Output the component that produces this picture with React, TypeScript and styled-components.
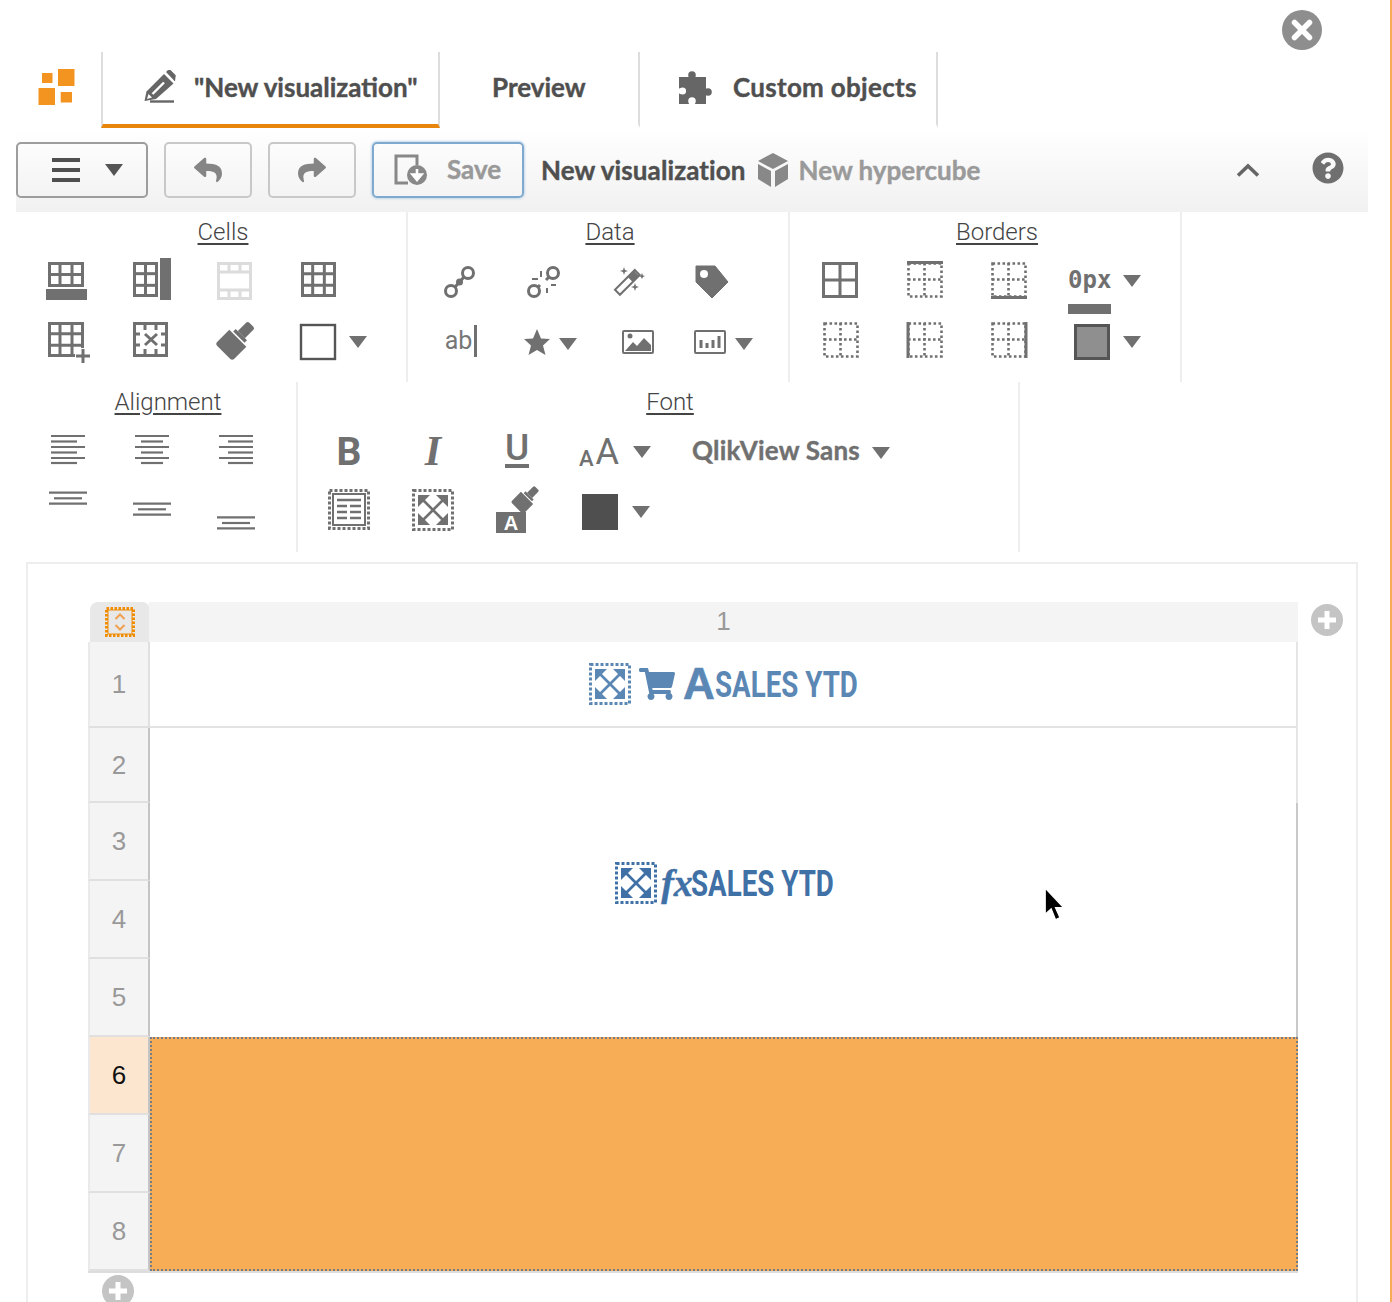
import React from "react"
import styled, { createGlobalStyle } from "styled-components"
import { FaReply, FaShare, FaShoppingCart, FaQuestionCircle } from "react-icons/fa"

const INK = "#707070"

const GlobalStyle = createGlobalStyle`
  html, body {
    margin: 0;
    padding: 0;
    background: #fff;
  }
  * {
    box-sizing: border-box;
  }
`

const Frame = ({ children }: { children: React.ReactNode }) => (
  <GlyphSvg viewBox="0 0 84 60">{children}</GlyphSvg>
)

const CaretMark = ({ x, y, color = INK }: { x: number; y: number; color?: string }) => (
  <polygon points={`${x},${y} ${x + 18},${y} ${x + 9},${y + 12}`} fill={color} />
)

const TableLines = ({
  x,
  y,
  w,
  h,
  cols,
  rows,
  color = INK,
}: {
  x: number
  y: number
  w: number
  h: number
  cols: number
  rows: number
  color?: string
}) => (
  <g fill="none" stroke={color} strokeWidth="3">
    <rect x={x + 1.5} y={y + 1.5} width={w - 3} height={h - 3} />
    {Array.from({ length: cols - 1 }, (_, i) => {
      const px = x + ((i + 1) * w) / cols
      return <line key={i} x1={px} x2={px} y1={y} y2={y + h} />
    })}
    {Array.from({ length: rows - 1 }, (_, i) => {
      const py = y + ((i + 1) * h) / rows
      return <line key={i} x1={x} x2={x + w} y1={py} y2={py} />
    })}
  </g>
)

const DottedBorders = ({ solid }: { solid?: "top" | "bottom" | "left" | "right" }) => (
  <g fill="none" stroke={INK} strokeWidth="2.6">
    <g strokeDasharray="2.6 2.4">
      <rect x="25.5" y="13.5" width="33" height="33" />
      <line x1="41.5" x2="41.5" y1="13" y2="47" />
      <line x1="25" x2="59" y1="29.5" y2="29.5" />
    </g>
    <g strokeWidth="3">
      {solid === "top" && <line x1="24" x2="60" y1="12.5" y2="12.5" />}
      {solid === "bottom" && <line x1="24" x2="60" y1="47.5" y2="47.5" />}
      {solid === "left" && <line x1="25" x2="25" y1="12" y2="48" />}
      {solid === "right" && <line x1="59" x2="59" y1="12" y2="48" />}
    </g>
  </g>
)

const AlignLines = ({ lines }: { lines: [number, number, number][] }) => (
  <g stroke={INK} strokeWidth="2.2">
    {lines.map(([x1, x2, y], i) => (
      <line key={i} x1={x1} x2={x2} y1={y} y2={y} />
    ))}
  </g>
)

const ExpandIcon = ({ color }: { color: string }) => (
  <svg width="42" height="42" viewBox="0 0 42 42">
    <rect
      x="1.5"
      y="1.5"
      width="39"
      height="39"
      fill="none"
      stroke={color}
      strokeWidth="3"
      strokeDasharray="3 2"
    />
    <g stroke={color} strokeWidth="2.6">
      <line x1="10" y1="10" x2="32" y2="32" />
      <line x1="32" y1="10" x2="10" y2="32" />
    </g>
    <g fill={color}>
      <polygon points="6,6 18,6 6,18" />
      <polygon points="36,6 24,6 36,18" />
      <polygon points="6,36 18,36 6,24" />
      <polygon points="36,36 24,36 36,24" />
    </g>
  </svg>
)

const BrushShape = ({ fill = INK }: { fill?: string }) => (
  <g fill={fill}>
    <path d="M-12 -4 L12 -4 L12 13 Q12 16 9 16 L-9 16 Q-12 16 -12 13 Z" />
    <rect x="-8" y="-9" width="16" height="3.5" />
    <path d="M-5 -9 L-5 -21 Q-5 -23 -3 -23 L3 -23 Q5 -23 5 -21 L5 -9 Z" />
  </g>
)

const cellsIcons = [
  <Frame key="a">
    <TableLines x={23} y={12} w={36} h={25} cols={3} rows={2} />
    <rect x="21" y="39" width="41" height="11" fill={INK} />
  </Frame>,
  <Frame key="b">
    <TableLines x={24} y={12} w={25} h={35} cols={2} rows={3} />
    <rect x="51" y="8" width="11" height="42" fill={INK} />
  </Frame>,
  <Frame key="c">
    <g fill="none" stroke="#dcdcdc" strokeWidth="3">
      <rect x="25.5" y="13.5" width="32" height="35" />
      <line x1="24" x2="59" y1="22" y2="22" />
      <line x1="24" x2="59" y1="40" y2="40" />
      <line x1="36" x2="36" y1="12" y2="22" />
      <line x1="47" x2="47" y1="12" y2="22" />
      <line x1="36" x2="36" y1="40" y2="50" />
      <line x1="47" x2="47" y1="40" y2="50" />
    </g>
  </Frame>,
  <Frame key="d">
    <TableLines x={24} y={12} w={35} h={35} cols={3} rows={3} />
  </Frame>,
  <Frame key="e">
    <TableLines x={23} y={12} w={36} h={35} cols={3} rows={3} />
    <rect x="50" y="38" width="16" height="16" fill="#fff" />
    <path d="M51 46 H65 M58 39 V53" stroke={INK} strokeWidth="3" />
  </Frame>,
  <Frame key="f">
    <g fill="none" stroke={INK} strokeWidth="3">
      <rect x="25.5" y="13.5" width="32" height="32" />
      <path
        d="M36 13 V20 M47 13 V20 M36 39 V46 M47 39 V46 M25 24 H31 M25 35 H31 M52 24 H58 M52 35 H58"
      />
      <path d="M36 24 L48 35 M48 24 L36 35" />
    </g>
  </Frame>,
  <Frame key="g">
    <g transform="translate(42 31) rotate(45)">
      <BrushShape />
    </g>
  </Frame>,
  <Frame key="h">
    <rect x="24" y="15" width="34" height="34" fill="#fff" stroke="#555" strokeWidth="2.4" />
    <CaretMark x={72} y={26} />
  </Frame>,
]

const bordersIconsTop = [
  <Frame key="a">
    <TableLines x={23} y={12} w={36} h={36} cols={2} rows={2} />
  </Frame>,
  <Frame key="b">
    <DottedBorders solid="top" />
  </Frame>,
  <Frame key="c">
    <DottedBorders solid="bottom" />
  </Frame>,
]

const bordersIconsBottom = [
  <Frame key="d">
    <DottedBorders />
  </Frame>,
  <Frame key="e">
    <DottedBorders solid="left" />
  </Frame>,
  <Frame key="f">
    <DottedBorders solid="right" />
  </Frame>,
  <Frame key="g">
    <rect x="24.5" y="15.5" width="33" height="33" fill="#8f8f8f" stroke="#555" strokeWidth="3" />
    <CaretMark x={72} y={26} />
  </Frame>,
]

const App = () => {
  const rowHeights = [86, 75, 78, 78, 78, 78, 78, 78]

  return (
    <>
      <GlobalStyle />
      <Page>
        <TopBar>
          <CloseButton>
            <svg width="40" height="40" viewBox="0 0 40 40">
              <circle cx="20" cy="20" r="20" fill="#8e8e8e" />
              <path d="M12.5 12.5 L27.5 27.5 M27.5 12.5 L12.5 27.5" stroke="#fff" strokeWidth="5.5" strokeLinecap="round" />
            </svg>
          </CloseButton>
        </TopBar>

        <TabBar>
          <LogoBox>
            <svg width="38" height="36" viewBox="0 0 38 36">
              <g fill="#f39420">
                <rect x="4" y="4" width="10.5" height="10" />
                <rect x="20" y="0" width="16.5" height="17" />
                <rect x="0.5" y="19" width="16.5" height="17" />
                <rect x="22.7" y="23" width="11.3" height="10.5" />
              </g>
            </svg>
          </LogoBox>
          <Tab $width={339} $active $pad={41} $gap={16}>
            <svg width="34" height="34" viewBox="0 0 34 34">
              <path d="M0.5 31 L2.5 21.5 L20 4 L29.5 13.5 L12 29 Z" fill="#666" />
              <path d="M22 2 L24.5 -0.5 Q25.5 -1 26.5 0 L31.5 5 Q32 6 31.5 7 L31 11.5 Z" fill="#666" />
              <path d="M8.5 24 L20 12.5" stroke="#fff" strokeWidth="2.4" />
              <path d="M3 29 L4.5 24 L8 27.5 Z" fill="#fff" />
              <line x1="6" x2="30" y1="31.5" y2="31.5" stroke="#666" strokeWidth="2.4" />
            </svg>
            <TabLabel>"New visualization"</TabLabel>
          </Tab>
          <Tab $width={200} $pad={52} $gap={0}>
            <TabLabel>Preview</TabLabel>
          </Tab>
          <Tab $width={298} $pad={39} $gap={21}>
            <svg width="33" height="33" viewBox="0 0 33 33">
              <g fill="#666">
                <rect x="0" y="6" width="27" height="27" />
                <circle cx="13" cy="4" r="3.8" />
                <rect x="10" y="4" width="6" height="4" />
                <circle cx="29" cy="21" r="3.8" />
                <rect x="25" y="18" width="4" height="6" />
              </g>
              <g fill="#fff">
                <circle cx="3.5" cy="20" r="3.6" />
                <rect x="-1" y="17.5" width="4" height="5" />
                <circle cx="13" cy="30" r="3.8" />
                <rect x="10" y="30" width="6" height="4" />
              </g>
            </svg>
            <TabLabel $spacing={0.3}>Custom objects</TabLabel>
          </Tab>
        </TabBar>

        <Toolbar>
          <ToolButton $width={132} $border="#9d9d9d">
            <MenuBars>
              <span />
              <span />
              <span />
            </MenuBars>
            <Caret $color="#555" />
          </ToolButton>
          <ToolButton $width={88} $border="#c8c8c8">
            <FaReply size={28} color="#858585" />
          </ToolButton>
          <ToolButton $width={88} $border="#c8c8c8">
            <FaShare size={28} color="#858585" />
          </ToolButton>
          <SaveButton>
            <svg width="34" height="32" viewBox="0 0 34 32">
              <path d="M14 29 H2 V2 H23 V11" fill="none" stroke="#888" strokeWidth="3" />
              <circle cx="23" cy="21" r="10" fill="#888" />
              <path d="M23 15 V22 M18.5 20.5 L23 26 L27.5 20.5 Z" stroke="#fff" strokeWidth="2.6" fill="#fff" />
            </svg>
            <SaveLabel>Save</SaveLabel>
          </SaveButton>
          <TitleText>New visualization</TitleText>
          <CubeBox>
            <svg width="30" height="34" viewBox="0 0 30 34">
              <g fill="#888">
                <polygon points="15,0 30,8 15,16 0,8" />
                <polygon points="0,11 13,18 13,34 0,26" />
                <polygon points="30,11 17,18 17,34 30,26" />
              </g>
            </svg>
          </CubeBox>
          <SubTitle>New hypercube</SubTitle>
          <ChevronBox>
            <svg width="24" height="14" viewBox="0 0 24 14">
              <path d="M2 12.5 L12 3 L22 12.5" fill="none" stroke="#666" strokeWidth="3.6" />
            </svg>
          </ChevronBox>
          <HelpBox>
            <FaQuestionCircle size={32} color="#6f6f6f" />
          </HelpBox>
        </Toolbar>

        <RibbonRow>
          <Section $width={392}>
            <SectionLabel>Cells</SectionLabel>
            <IconGrid $inset={9}>
              {cellsIcons.map((icon, i) => (
                <Slot key={i}>{icon}</Slot>
              ))}
            </IconGrid>
          </Section>
          <Section $width={382}>
            <SectionLabel>Data</SectionLabel>
            <IconGrid $inset={10}>
              <Slot>
                <Frame>
                  <g fill="none" stroke={INK} strokeWidth="3">
                    <circle cx="50" cy="23" r="5.5" />
                    <circle cx="33" cy="41" r="5.5" />
                    <line x1="37" y1="37" x2="46" y2="27" />
                  </g>
                  <circle cx="41.5" cy="32" r="3.5" fill={INK} />
                </Frame>
              </Slot>
              <Slot>
                <Frame>
                  <g fill="none" stroke={INK} strokeWidth="3">
                    <circle cx="51" cy="23" r="5.5" />
                    <circle cx="32" cy="41" r="5.5" />
                    <path d="M47 27 L44 30 M36 37 L38 35" />
                  </g>
                  <path d="M39 21 V27 M30 29 H36 M49 35 H54 M45 38 V43" stroke={INK} strokeWidth="2" />
                </Frame>
              </Slot>
              <Slot>
                <Frame>
                  <g transform="rotate(-45 41 32)">
                    <rect x="27" y="29" width="28" height="7" fill="#fff" stroke={INK} strokeWidth="2" />
                    <rect x="45" y="29" width="9" height="7" fill={INK} />
                  </g>
                  <g fill={INK}>
                    <path d="M38 17 L39 20 L42 21 L39 22 L38 25 L37 22 L34 21 L37 20 Z" />
                    <path d="M56 23 L57 25.5 L59 26 L57 27 L56 29 L55 27 L53 26 L55 25.5 Z" />
                    <path d="M49 33 L50 36 L53 37 L50 38 L49 41 L48 38 L45 37 L48 36 Z" />
                  </g>
                </Frame>
              </Slot>
              <Slot>
                <Frame>
                  <path
                    d="M26 16 H45 L58 32 L42 48 L26 32 Z"
                    fill={INK}
                    stroke={INK}
                    strokeWidth="1"
                    strokeLinejoin="round"
                  />
                  <circle cx="34" cy="24" r="4" fill="#fff" />
                </Frame>
              </Slot>
              <Slot>
                <AbText>ab</AbText>
              </Slot>
              <Slot>
                <Frame>
                  <polygon
                    points="35,19 39,28.5 48,29 41,35.5 43.5,45 35,40 26.5,45 29,35.5 22,29 31,28.5"
                    fill={INK}
                  />
                  <CaretMark x={57} y={28} />
                </Frame>
              </Slot>
              <Slot>
                <Frame>
                  <rect x="37" y="21" width="30" height="22" rx="1" fill="#fff" stroke={INK} strokeWidth="2" />
                  <circle cx="44" cy="26" r="2.5" fill={INK} />
                  <path d="M39 41 L47 32 L51 36 L58 28 L65 35 V41 Z" fill={INK} />
                </Frame>
              </Slot>
              <Slot>
                <Frame>
                  <rect x="25" y="21" width="30" height="22" rx="1" fill="#fff" stroke={INK} strokeWidth="2" />
                  <path d="M31 30 V38 M37 33 V38 M43 30 V38 M49 26 V38" stroke={INK} strokeWidth="3" />
                  <CaretMark x={65} y={28} />
                </Frame>
              </Slot>
            </IconGrid>
          </Section>
          <Section $width={392}>
            <SectionLabel>Borders</SectionLabel>
            <IconGrid $inset={9}>
              {bordersIconsTop.map((icon, i) => (
                <Slot key={i}>{icon}</Slot>
              ))}
              <Slot $start={17}>
                <WidthValue>0px</WidthValue>
                <Caret $gap={12} $drop={2} />
              </Slot>
              {bordersIconsBottom.map((icon, i) => (
                <Slot key={i}>{icon}</Slot>
              ))}
            </IconGrid>
          </Section>
        </RibbonRow>

        <RibbonRow>
          <Section $width={282}>
            <SectionLabel>Alignment</SectionLabel>
            <IconGrid $inset={10}>
              <Slot>
                <Frame>
                  <AlignLines lines={[[25, 59, 16], [25, 51, 21.5], [25, 59, 27], [25, 51, 32.5], [25, 59, 38], [25, 51, 43]]} />
                </Frame>
              </Slot>
              <Slot>
                <Frame>
                  <AlignLines lines={[[25, 59, 16], [31, 53, 21.5], [25, 59, 27], [31, 53, 32.5], [25, 59, 38], [31, 53, 43]]} />
                </Frame>
              </Slot>
              <Slot>
                <Frame>
                  <AlignLines lines={[[25, 59, 16], [34, 59, 21.5], [25, 59, 27], [34, 59, 32.5], [25, 59, 38], [34, 59, 43]]} />
                </Frame>
              </Slot>
              <Slot>
                <Frame>
                  <AlignLines lines={[[23, 61, 12.7], [28, 56, 18.3], [23, 61, 23.7]]} />
                </Frame>
              </Slot>
              <Slot>
                <Frame>
                  <AlignLines lines={[[23, 61, 23.7], [28, 56, 29.3], [23, 61, 34.7]]} />
                </Frame>
              </Slot>
              <Slot>
                <Frame>
                  <AlignLines lines={[[23, 61, 37.3], [28, 56, 43], [23, 61, 48.3]]} />
                </Frame>
              </Slot>
            </IconGrid>
          </Section>
          <Section $width={722}>
            <SectionLabel>Font</SectionLabel>
            <IconGrid $inset={9} $extra>
              <Slot>
                <BoldMark>B</BoldMark>
              </Slot>
              <Slot>
                <ItalicMark>I</ItalicMark>
              </Slot>
              <Slot>
                <UnderlineMark>U</UnderlineMark>
              </Slot>
              <Slot $start={20}>
                <SmallA>A</SmallA>
                <BigA>A</BigA>
                <Caret $gap={14} $drop={4} />
              </Slot>
              <Slot $start={49}>
                <FontName>QlikView Sans</FontName>
                <Caret $gap={12} $drop={6} />
              </Slot>
              <Slot>
                <Frame>
                  <rect x="22.5" y="10.5" width="39" height="38" fill="none" stroke={INK} strokeWidth="3" strokeDasharray="3 2" />
                  <rect x="26" y="14" width="32" height="31" fill="none" stroke={INK} strokeWidth="2" />
                  <path d="M30 20 H54 M30 26 H40 M43 26 H54 M30 32 H40 M43 32 H54 M30 38 H40 M43 38 H54" stroke={INK} strokeWidth="2.4" />
                </Frame>
              </Slot>
              <Slot>
                <ExpandIcon color={INK} />
              </Slot>
              <Slot>
                <Frame>
                  <g transform="translate(50 20) rotate(45) scale(.72)">
                    <BrushShape />
                  </g>
                  <rect x="21" y="32" width="30" height="21" fill={INK} />
                  <BrushLetter x="36" y="50">A</BrushLetter>
                </Frame>
              </Slot>
              <Slot>
                <Frame>
                  <rect x="23" y="14" width="36" height="36" fill="#4f4f4f" />
                  <CaretMark x={73} y={26} />
                </Frame>
              </Slot>
            </IconGrid>
          </Section>
        </RibbonRow>

        <Panel>
          <TableRow>
            <SheetGrid $rows={rowHeights}>
              <Corner>
                <svg width="30" height="30" viewBox="0 0 30 30">
                  <rect x="1.5" y="1.5" width="27" height="27" fill="none" stroke="#f08c00" strokeWidth="3" strokeDasharray="2.5 1.5" />
                  <rect x="3" y="3" width="24" height="24" fill="none" stroke="#f08c00" strokeWidth="1" />
                  <path d="M10.5 12 L15 7.5 L19.5 12 M10.5 18 L15 22.5 L19.5 18" fill="none" stroke="#f0a050" strokeWidth="2" />
                </svg>
              </Corner>
              <ColumnHead>1</ColumnHead>
              {rowHeights.map((_, i) => (
                <RowHead key={i} $selected={i === 5} $strong={i > 0}>
                  {i + 1}
                </RowHead>
              ))}
              <TitleCell>
                <ExpandIcon color="#5b87b5" />
                <FaShoppingCart size={36} color="#5b87b5" />
                <BigLetter>A</BigLetter>
                <SalesText $color="#5b87b5">SALES YTD</SalesText>
              </TitleCell>
              <BodyCell>
                <ExpandIcon color="#3f70a6" />
                <FxMark>fx</FxMark>
                <SalesText $color="#3f70a6">SALES YTD</SalesText>
              </BodyCell>
              <SelectedCell />
            </SheetGrid>
            <AddButton />
          </TableRow>
          <BottomAdd>
            <AddButton />
          </BottomAdd>
        </Panel>

        <Pointer>
          <svg width="22" height="36" viewBox="0 0 20 33">
            <path d="M1 1 L1 25 L6.5 20 L10.5 30 L14.5 28 L10.5 19 L18 19 Z" fill="#000" stroke="#fff" strokeWidth="1.2" />
          </svg>
        </Pointer>
      </Page>
    </>
  )
}

const AddButton = () => (
  <AddBox>
    <svg width="32" height="32" viewBox="0 0 32 32">
      <circle cx="16" cy="16" r="16" fill="#c4c4c4" />
      <path d="M16 7 V25 M7 16 H25" stroke="#fff" strokeWidth="5" />
    </svg>
  </AddBox>
)

export default App

const Page = styled.div`
  position: relative;
  width: 1392px;
  height: 1302px;
  overflow: hidden;
  background: #fff;
  border-right: 2px solid #f7ad55;
  font-family: "Roboto", "Liberation Sans", sans-serif;
`

const TopBar = styled.div`
  height: 52px;
  display: flex;
  justify-content: flex-end;
  padding-right: 68px;
`

const CloseButton = styled.div`
  width: 40px;
  height: 40px;
  margin-top: 10px;
`

const TabBar = styled.div`
  height: 76px;
  display: flex;
`

const LogoBox = styled.div`
  width: 101px;
  padding: 17px 0 0 38px;
`

const Tab = styled.div<{ $width: number; $active?: boolean; $pad: number; $gap: number }>`
  width: ${(p) => p.$width}px;
  display: flex;
  align-items: center;
  gap: ${(p) => p.$gap}px;
  padding-left: ${(p) => p.$pad}px;
  padding-bottom: 2px;
  border-right: 2px solid #ddd;
  border-left: ${(p) => (p.$active ? "2px solid #ddd" : "none")};
  border-bottom: 4px solid ${(p) => (p.$active ? "#e8860c" : "transparent")};
`

const TabLabel = styled.span<{ $spacing?: number }>`
  font-family: "Lato", "Liberation Sans", sans-serif;
  font-weight: 700;
  font-size: 26px;
  letter-spacing: ${(p) => p.$spacing ?? 0}px;
  color: #4f4f4f;
  white-space: nowrap;
  -webkit-text-stroke: 0.4px #4f4f4f;
`

const Toolbar = styled.div`
  height: 84px;
  margin: 0 22px 0 16px;
  padding: 14px 24px 14px 0;
  display: flex;
  align-items: center;
  background: linear-gradient(#fff, #f1f1f1);
`

const ToolButton = styled.div<{ $width: number; $border: string }>`
  width: ${(p) => p.$width}px;
  height: 56px;
  margin-right: 16px;
  display: flex;
  align-items: center;
  justify-content: center;
  border: 2px solid ${(p) => p.$border};
  border-radius: 5px;
  background: transparent;
`

const SaveButton = styled.div`
  width: 152px;
  height: 56px;
  display: flex;
  align-items: center;
  padding-left: 20px;
  gap: 19px;
  border: 2px solid #7fa9cf;
  border-radius: 5px;
  box-shadow: 0 0 3px #8fb8dc;
`

const SaveLabel = styled.span`
  font-family: "Lato", "Liberation Sans", sans-serif;
  font-weight: 700;
  font-size: 26px;
  color: #999;
  -webkit-text-stroke: 0.4px #999;
  margin-top: -3px;
`

const MenuBars = styled.div`
  display: flex;
  flex-direction: column;
  gap: 6px;
  width: 28px;
  margin-left: 10px;

  span {
    display: block;
    height: 4px;
    background: #4f4f4f;
  }
`

const Caret = styled.span<{ $gap?: number; $color?: string; $drop?: number }>`
  display: inline-block;
  flex: none;
  width: 0;
  height: 0;
  margin-left: ${(p) => p.$gap ?? 25}px;
  margin-top: ${(p) => p.$drop ?? 0}px;
  border-left: 9px solid transparent;
  border-right: 9px solid transparent;
  border-top: 12px solid ${(p) => p.$color || INK};
`

const TitleText = styled.span`
  margin-left: 17px;
  font-family: "Lato", "Liberation Sans", sans-serif;
  font-weight: 700;
  font-size: 26px;
  letter-spacing: 0.1px;
  color: #4f4f4f;
  white-space: nowrap;
  -webkit-text-stroke: 0.4px #4f4f4f;
`

const CubeBox = styled.div`
  margin-left: 12px;
  display: flex;
`

const SubTitle = styled(TitleText)`
  margin-left: 11px;
  letter-spacing: 0;
  color: #9a9a9a;
  -webkit-text-stroke: 0.4px #9a9a9a;
`

const ChevronBox = styled.div`
  margin-left: auto;
  margin-right: 52px;
  display: flex;
`

const HelpBox = styled.div`
  display: flex;
  margin-top: -4px;
`

const RibbonRow = styled.div`
  display: flex;
  height: 170px;
  margin-left: 16px;
`

const Section = styled.div<{ $width: number }>`
  width: ${(p) => p.$width}px;
  border-right: 2px solid #eee;
`

const SectionLabel = styled.div`
  height: 38px;
  margin-left: 24px;
  text-align: center;
  font-size: 24px;
  font-weight: 300;
  line-height: 40px;
  color: #444;
  text-decoration: underline;
  text-underline-offset: 3px;
`

const IconGrid = styled.div<{ $inset: number; $extra?: boolean }>`
  display: grid;
  grid-template-columns: ${(p) => (p.$extra ? "repeat(4, 84px) 1fr" : "repeat(auto-fill, 84px)")};
  grid-auto-rows: 60px;
  margin-left: ${(p) => p.$inset}px;
`

const Slot = styled.div<{ $start?: number }>`
  display: flex;
  align-items: center;
  justify-content: ${(p) => (p.$start !== undefined ? "flex-start" : "center")};
  padding-left: ${(p) => p.$start ?? 0}px;
`

const GlyphSvg = styled.svg`
  display: block;
  width: 84px;
  height: 60px;
  overflow: visible;
`

const AbText = styled.span`
  font-size: 25px;
  font-weight: 400;
  line-height: 32px;
  color: #777;
  padding-right: 2px;
  margin: 2px 0 0 2px;
  border-right: 3px solid ${INK};
`

const WidthValue = styled.span`
  position: relative;
  font-family: "DejaVu Sans Mono", "Liberation Mono", monospace;
  font-weight: 700;
  font-size: 24px;
  color: ${INK};

  &::after {
    content: "";
    position: absolute;
    left: 0;
    right: 0;
    top: 38px;
    height: 10px;
    background: ${INK};
  }
`

const BoldMark = styled.span`
  font-weight: 700;
  font-size: 39px;
  color: ${INK};
  margin-top: 3px;
`

const ItalicMark = styled.span`
  font-family: "Liberation Serif", serif;
  font-style: italic;
  font-weight: 700;
  font-size: 42px;
  color: ${INK};
  margin-top: 2px;
`

const UnderlineMark = styled.span`
  font-weight: 500;
  font-size: 37px;
  line-height: 33px;
  color: ${INK};
  border-bottom: 4px solid ${INK};
  margin-top: -2px;
`

const SmallA = styled.span`
  font-size: 22px;
  font-weight: 500;
  color: ${INK};
  align-self: flex-end;
  margin-bottom: 9px;
`

const BigA = styled.span`
  font-size: 36px;
  color: ${INK};
  margin: 3px 0 0 2px;
`

const FontName = styled(TitleText)`
  margin-left: 0;
  letter-spacing: 0.2px;
  color: ${INK};
  -webkit-text-stroke: 0.4px ${INK};
`

const BrushLetter = styled.text`
  font-family: "Liberation Sans", sans-serif;
  font-weight: 700;
  font-size: 20px;
  fill: #fff;
  text-anchor: middle;
`

const Panel = styled.div`
  margin: 10px 32px 0 26px;
  padding: 38px 0 40px 60px;
  border: 2px solid #eee;
`

const TableRow = styled.div`
  display: flex;
  gap: 13px;
`

const SheetGrid = styled.div<{ $rows: number[] }>`
  width: 1210px;
  display: grid;
  grid-template-columns: 62px 1fr;
  grid-template-rows: 40px ${(p) => p.$rows.map((r) => `${r}px`).join(" ")};
  grid-auto-flow: column;
  border-bottom: 2px solid #ddd;
  background: #fff;
`

const Corner = styled.div`
  background: #e8e8e8;
  border-radius: 8px 8px 0 0;
  display: flex;
  align-items: center;
  justify-content: center;
  margin-left: 2px;
`

const RowHead = styled.div<{ $selected?: boolean; $strong?: boolean }>`
  display: flex;
  align-items: center;
  justify-content: center;
  padding-top: 1px;
  font-family: "Liberation Sans", sans-serif;
  font-size: 26px;
  color: ${(p) => (p.$selected ? "#111" : "#999")};
  background: ${(p) => (p.$selected ? "#fde6cf" : "#f4f4f4")};
  border-left: 2px solid #eaeaea;
  border-right: 2px solid ${(p) => (p.$strong ? "#c4c4c4" : "#e0e0e0")};
  border-bottom: 2px solid #e0e0e0;
`

const ColumnHead = styled.div`
  grid-column: 2;
  grid-row: 1;
  display: flex;
  align-items: center;
  justify-content: center;
  margin-left: -1px;
  padding-bottom: 2px;
  font-family: "Liberation Sans", sans-serif;
  font-size: 26px;
  color: #999;
  background: #f4f4f4;
`

const TitleCell = styled.div`
  grid-column: 2;
  grid-row: 2;
  display: flex;
  align-items: center;
  justify-content: center;
  gap: 8px;
  border-bottom: 2px solid #e3e3e3;
  border-right: 2px solid #e5e5e5;
`

const BodyCell = styled.div`
  grid-column: 2;
  grid-row: 3 / span 4;
  display: flex;
  align-items: center;
  justify-content: center;
  gap: 4px;
  background:
    linear-gradient(#e5e5e5, #e5e5e5) right top / 2px 75px no-repeat,
    linear-gradient(#c8c8c8, #c8c8c8) right bottom / 2px 234px no-repeat;
`

const SelectedCell = styled.div`
  grid-column: 2;
  grid-row: 7 / span 3;
  background: #f7ad55;
  border: 2px dotted #757c85;
`

const BigLetter = styled.span`
  font-family: "Liberation Sans", sans-serif;
  font-weight: 700;
  font-size: 44px;
  color: #5b87b5;
  -webkit-text-stroke: 0.6px #5b87b5;
  margin-right: -8px;
`

const SalesText = styled.span<{ $color: string }>`
  display: inline-block;
  width: 142px;
  padding-top: 2px;
  white-space: nowrap;
  font-weight: 700;
  font-size: 36px;
  line-height: 40px;
  color: ${(p) => p.$color};
  transform: scaleX(0.77);
  transform-origin: left center;
`

const FxMark = styled.span`
  font-family: "Liberation Serif", serif;
  font-style: italic;
  font-weight: 700;
  font-size: 38px;
  color: #3f70a6;
  line-height: 40px;
  margin-right: -6px;
  -webkit-text-stroke: 0.4px #3f70a6;
`

const AddBox = styled.div`
  width: 32px;
  height: 32px;
  margin-top: 2px;
  flex: none;
`

const BottomAdd = styled.div`
  margin: 1px 0 0 14px;
`

const Pointer = styled.div`
  position: absolute;
  left: 1044px;
  top: 887px;
`
